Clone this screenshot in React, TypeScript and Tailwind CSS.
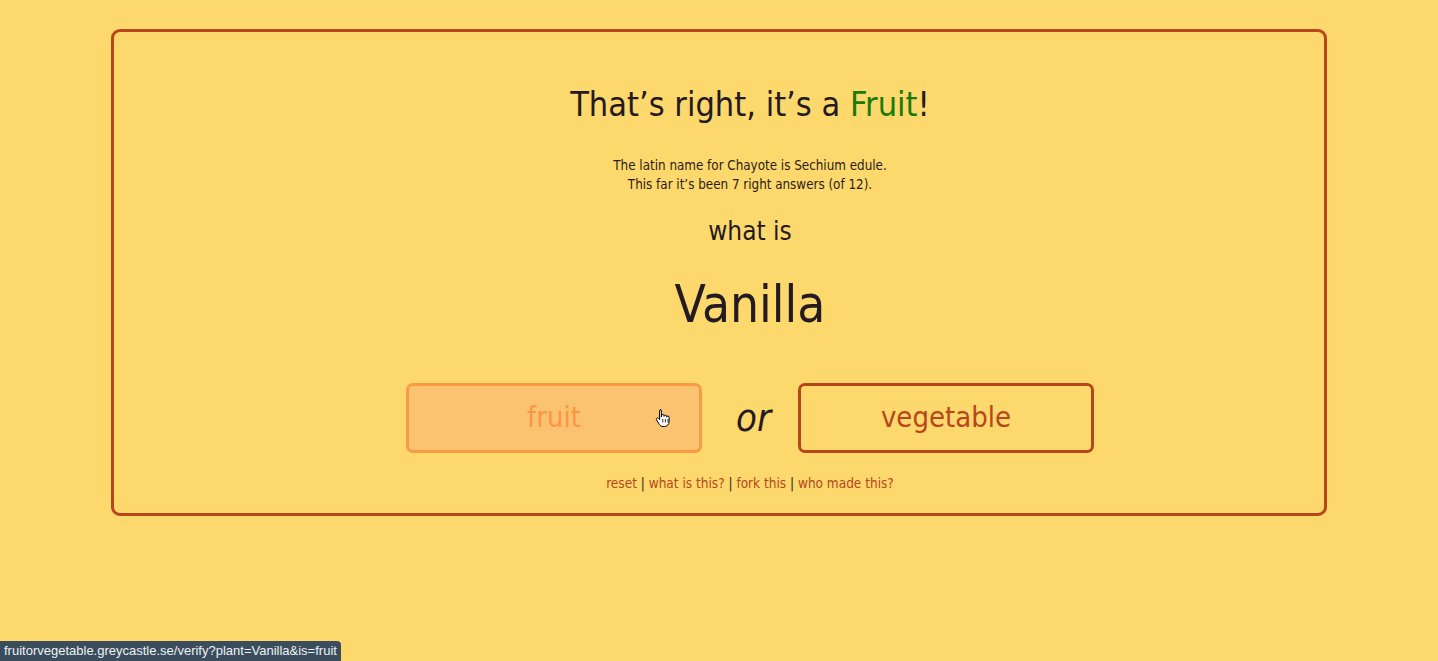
import React from 'react';

const font = { fontFamily: '"Liberation Sans Narrow", "DejaVu Sans Condensed", "Liberation Sans", sans-serif' };

// Little hand pointer for the hovered button
const HandCursor: React.FC = () => (
    <svg width="16" height="20" viewBox="0 0 16 20" className="absolute left-[246px] top-[22px]">
        <path d="M5 1.5c.8 0 1.4.6 1.4 1.4V9l.1-1.2c0-.8.6-1.3 1.3-1.3s1.3.6 1.3 1.3v.6c0-.8.6-1.3 1.3-1.3s1.3.6 1.3 1.3v.8c0-.7.6-1.2 1.2-1.2.7 0 1.2.6 1.2 1.3v4.2c0 2.9-2 5-4.8 5H8c-1.6 0-2.7-.7-3.6-2L1.6 12c-.5-.7-.3-1.5.4-1.9.6-.4 1.4-.2 1.8.4l.8 1.2V2.9c0-.8.6-1.4 1.4-1.4z" fill="#fff" stroke="#000" strokeWidth="1" />
        <path d="M7.8 11v3.5M10.4 11v3.5M13 11v3.5" stroke="#000" strokeWidth="0.8" />
    </svg>
);

const App: React.FC = () => {
    return (
        <div className="relative w-[1438px] h-[661px] overflow-hidden bg-[#fdd86c]" style={font}>
            <div className="pt-[29px] px-[111px]">
                <div className="h-[487px] border-[3px] border-[#b8461c] rounded-[9px] pl-[62px] flex flex-col items-center">
                    <h1 className="mt-[48px] text-[34px] leading-[48px] text-[#231a22]">
                        That’s right, it’s a <span className="text-[#1b7a06]">Fruit</span>!
                    </h1>
                    <p className="mt-[28px] text-[13.3px] leading-[19px] text-[#2b1e1a] text-center">
                        The latin name for Chayote is Sechium edule.<br />
                        This far it’s been 7 right answers (of 12).
                    </p>
                    <p className="mt-[20px] text-[26px] leading-[34px] text-[#231a22]">what is</p>
                    <p className="mt-[22px] text-[51px] leading-[70px] text-[#231a22]">Vanilla</p>
                    <div className="mt-[43px] flex items-center gap-[34px]">
                        <div className="relative w-[296px] h-[70px] rounded-[7px] border-[3px] border-[#fb9a45] bg-[#fbc370] flex items-center justify-center text-[29px] text-[#fb9645]">
                            fruit
                            <HandCursor />
                        </div>
                        <span className="text-[38px] italic text-[#231a22] w-[28px] text-center">or</span>
                        <div className="w-[296px] h-[70px] rounded-[7px] border-[3px] border-[#b8461c] flex items-center justify-center text-[29px] text-[#b8461c]">
                            vegetable
                        </div>
                    </div>
                    <p className="mt-[20px] text-[13.5px] text-[#2b1e1a]">
                        <a className="text-[#b8461c]">reset</a> | <a className="text-[#b8461c]">what is this?</a> | <a className="text-[#b8461c]">fork this</a> | <a className="text-[#b8461c]">who made this?</a>
                    </p>
                </div>
            </div>
            <div className="absolute left-0 bottom-0 h-[20px] px-[4px] bg-[#3b4d5c] rounded-tr-[4px] text-[13px] leading-[20px] text-[#eef1f3]" style={{ fontFamily: '"Liberation Sans", sans-serif' }}>
                fruitorvegetable.greycastle.se/verify?plant=Vanilla&amp;is=fruit
            </div>
        </div>
    );
};

export default App;
